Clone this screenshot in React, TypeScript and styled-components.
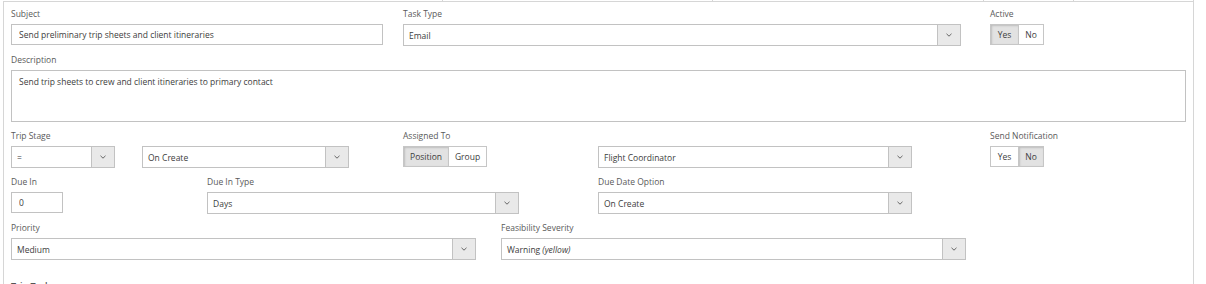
import React from 'react';
import styled, { createGlobalStyle, css } from 'styled-components';

const GlobalStyle = createGlobalStyle`
  html, body {
    margin: 0;
    padding: 0;
    background: #fff;
  }
  body {
    font-family: 'Open Sans', 'Noto Sans', sans-serif;
    color: #3d3d3d;
    overflow: hidden;
  }
`;

const Page = styled.div`
  width: 1206px;
  height: 284px;
  overflow: hidden;
  padding-left: 3px;
  box-sizing: border-box;
`;

// bottom edge of the table that sits above the form
const TableFoot = styled.div`
  display: flex;
  height: 1px;
  width: 1191px;
`;

const FootCell = styled.div<{ $w: number }>`
  flex: 0 0 ${(p) => p.$w}px;
  box-sizing: border-box;
  border-right: 1px solid #d6d6d6;
`;

const Panel = styled.div`
  width: 1191px;
  height: 283px;
  box-sizing: border-box;
  border: 1px solid #d6d6d6;
  border-bottom: none;
  padding: 6px 7px 0;
  display: flex;
  flex-direction: column;
  gap: 8px;
`;

const Row = styled.div`
  display: flex;
  align-items: flex-start;
`;

const Field = styled.div<{ $w?: number }>`
  flex: ${(p) => (p.$w ? `0 0 ${p.$w}px` : '1 1 auto')};
  display: flex;
  flex-direction: column;
  align-items: flex-start;
`;

const Label = styled.label`
  display: block;
  height: 12px;
  line-height: 12px;
  font-size: 8.5px;
  color: #5a5a5a;
  margin-bottom: 4px;
  white-space: nowrap;
`;

const Inline = styled.div<{ $gap: number }>`
  display: flex;
  align-items: flex-start;
  gap: ${(p) => p.$gap}px;
`;

const TextInput = styled.input<{ $w: number }>`
  width: ${(p) => p.$w}px;
  height: 21px;
  box-sizing: border-box;
  border: 1px solid #c2c2c2;
  border-radius: 0;
  padding: 0 7px;
  margin: 0;
  font-family: inherit;
  font-size: 8.5px;
  color: #3d3d3d;
  background: #fff;
  outline: none;
`;

const TextArea = styled.textarea`
  width: 100%;
  height: 52px;
  box-sizing: border-box;
  border: 1px solid #c2c2c2;
  border-radius: 0;
  padding: 5px 7px;
  margin: 0;
  font-family: inherit;
  font-size: 8.5px;
  line-height: 12px;
  color: #3d3d3d;
  resize: none;
  outline: none;
  display: block;
`;

const SelectBox = styled.div<{ $w: number }>`
  width: ${(p) => p.$w}px;
  height: 22px;
  box-sizing: border-box;
  border: 1px solid #c2c2c2;
  background: #fff;
  display: flex;
  align-items: stretch;
`;

const SelectValue = styled.span`
  flex: 1;
  padding: 0 5px;
  display: flex;
  align-items: center;
  font-size: 8.5px;
  color: #3d3d3d;
  white-space: nowrap;
  overflow: hidden;

  em {
    font-style: italic;
    margin-left: 2px;
  }
`;

const SelectArrow = styled.span`
  flex: 0 0 23px;
  box-sizing: border-box;
  border-left: 1px solid #c2c2c2;
  background: #e9e9e9;
  display: flex;
  align-items: center;
  justify-content: center;
`;

const Toggle = styled.div`
  display: inline-flex;
  height: 21px;
  box-sizing: border-box;
  border: 1px solid #c6c6c6;
  background: #fff;
`;

const ToggleOption = styled.span<{ $active?: boolean; $w: number }>`
  width: ${(p) => p.$w}px;
  box-sizing: border-box;
  display: flex;
  align-items: center;
  justify-content: center;
  font-size: 8.5px;
  color: #3d3d3d;

  & + & {
    border-left: 1px solid #c6c6c6;
  }

  ${(p) =>
    p.$active &&
    css`
      background: #e2e2e2;
      box-shadow: inset 1px 1px 2px rgba(0, 0, 0, 0.16);
    `}
`;

const SectionTitle = styled.div`
  margin-top: 12px;
  height: 12px;
  line-height: 12px;
  font-size: 9px;
  font-weight: 600;
  color: #555;
`;

const Chevron = () => (
  <svg width="6" height="4" viewBox="0 0 6 4">
    <polyline points="0.5,0.8 3,3.2 5.5,0.8" fill="none" stroke="#666" strokeWidth="1" />
  </svg>
);

const Select = ({ w, children }: { w: number; children: React.ReactNode }) => (
  <SelectBox $w={w}>
    <SelectValue>{children}</SelectValue>
    <SelectArrow>
      <Chevron />
    </SelectArrow>
  </SelectBox>
);

const YesNo = ({ yes }: { yes: boolean }) => (
  <Toggle>
    <ToggleOption $w={27} $active={yes}>Yes</ToggleOption>
    <ToggleOption $w={25} $active={!yes}>No</ToggleOption>
  </Toggle>
);

export default function App() {
  return (
    <Page>
      <GlobalStyle />
      <TableFoot>
        <FootCell $w={440} />
        <FootCell $w={270} />
        <FootCell $w={271} />
        <FootCell $w={90} />
        <FootCell $w={120} />
      </TableFoot>
      <Panel>
        <Row>
          <Field $w={392}>
            <Label>Subject</Label>
            <TextInput $w={372} readOnly value="Send preliminary trip sheets and client itineraries" />
          </Field>
          <Field $w={587}>
            <Label>Task Type</Label>
            <Select w={558}>Email</Select>
          </Field>
          <Field>
            <Label>Active</Label>
            <YesNo yes />
          </Field>
        </Row>

        <Row>
          <Field>
            <Label>Description</Label>
            <TextArea readOnly value="Send trip sheets to crew and client itineraries to primary contact" />
          </Field>
        </Row>

        <Row>
          <Field $w={392}>
            <Label>Trip Stage</Label>
            <Inline $gap={27}>
              <Select w={104}>=</Select>
              <Select w={207}>On Create</Select>
            </Inline>
          </Field>
          <Field $w={195}>
            <Label>Assigned To</Label>
            <Toggle>
              <ToggleOption $w={44} $active>Position</ToggleOption>
              <ToggleOption $w={38}>Group</ToggleOption>
            </Toggle>
          </Field>
          <Field $w={392}>
            <Label>&nbsp;</Label>
            <Select w={314}>Flight Coordinator</Select>
          </Field>
          <Field>
            <Label>Send Notification</Label>
            <YesNo yes={false} />
          </Field>
        </Row>

        <Row>
          <Field $w={196}>
            <Label>Due In</Label>
            <TextInput $w={52} readOnly value="0" />
          </Field>
          <Field $w={391}>
            <Label>Due In Type</Label>
            <Select w={312}>Days</Select>
          </Field>
          <Field $w={392}>
            <Label>Due Date Option</Label>
            <Select w={314}>On Create</Select>
          </Field>
        </Row>

        <Row>
          <Field $w={490}>
            <Label>Priority</Label>
            <Select w={465}>Medium</Select>
          </Field>
          <Field $w={490}>
            <Label>Feasibility Severity</Label>
            <Select w={465}>
              Warning <em>(yellow)</em>
            </Select>
          </Field>
        </Row>

        <SectionTitle>Trip Tasks</SectionTitle>
      </Panel>
    </Page>
  );
}
